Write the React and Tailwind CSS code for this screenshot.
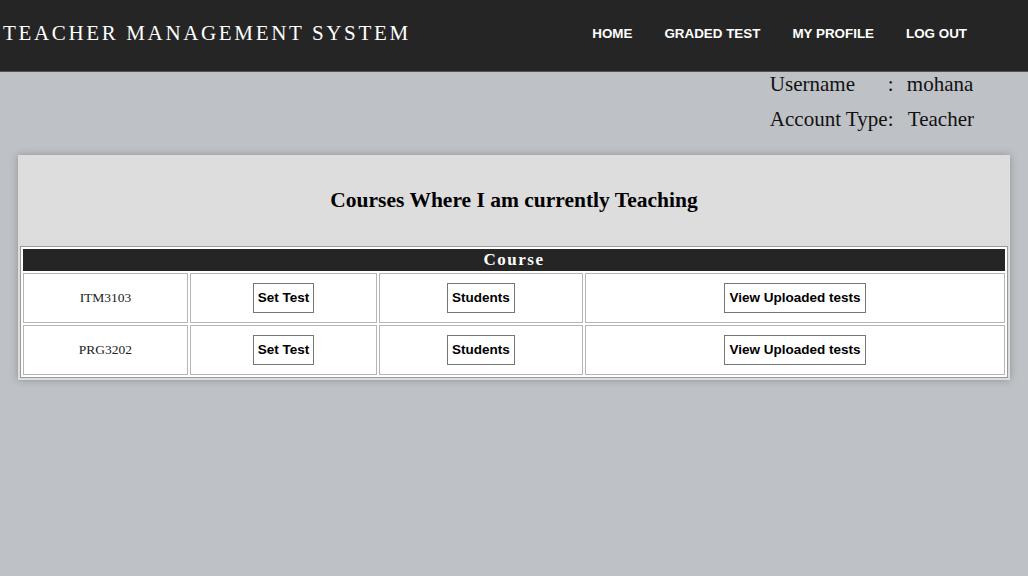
import React from "react";

const courses = ["ITM3103", "PRG3202"];

const Btn = ({ children }) => (
  <button className="border border-[#767676] bg-white px-[4px] h-[30px] text-[13.5px] font-bold text-black font-['Liberation_Sans',Arial,sans-serif]">
    {children}
  </button>
);

export default function App() {
  return (
    <div className="min-h-[576px] bg-[#bec2c6] font-['Liberation_Serif','Times_New_Roman',serif]">
      <header className="h-[72px] bg-[#252525] border-b border-[#555] flex items-center">
        <div className="pl-[3px] text-white text-[21px] tracking-[2.65px] leading-none pb-[4px]">
          TEACHER MANAGEMENT SYSTEM
        </div>
        <nav className="ml-auto mr-[61px] flex gap-[32px] text-white font-bold text-[13.4px] font-['Liberation_Sans',Arial,sans-serif] pb-[2px]">
          <a>HOME</a>
          <a>GRADED TEST</a>
          <a>MY PROFILE</a>
          <a>LOG OUT</a>
        </nav>
      </header>

      <div className="flex justify-end pr-[54px] -mt-[5px]">
        <div className="grid grid-cols-[118px_19px_auto] text-[21px] leading-[35px] text-[#111]">
          <span>Username</span>
          <span>:</span>
          <span>mohana</span>
          <span>Account Type</span>
          <span>:</span>
          <span className="pl-[1px]">Teacher</span>
        </div>
      </div>

      <div className="mx-[18px] mt-[18px] bg-[#dddddd] shadow-[0_0_8px_rgba(0,0,0,0.25)] px-[2px] pb-[2px]">
        <h2 className="h-[91px] flex items-center justify-center text-[21.5px] font-bold text-black">
          Courses Where I am currently Teaching
        </h2>
        <table className="w-full border border-[#999] border-separate border-spacing-[2px] bg-white">
          <thead>
            <tr>
              <th colSpan={4} className="bg-[#252525] text-white text-[17px] font-bold tracking-[1.5px] h-[22px] leading-[22px] p-0">
                Course
              </th>
            </tr>
          </thead>
          <tbody>
            {courses.map((c) => (
              <tr key={c}>
                <td className="w-[165px] h-[50px] border border-[#b5b5b5] text-center text-[13.5px] text-[#222]">{c}</td>
                <td className="w-[187px] border border-[#b5b5b5] text-center">
                  <Btn>Set Test</Btn>
                </td>
                <td className="w-[204px] border border-[#b5b5b5] text-center">
                  <Btn>Students</Btn>
                </td>
                <td className="border border-[#b5b5b5] text-center">
                  <Btn>View Uploaded tests</Btn>
                </td>
              </tr>
            ))}
          </tbody>
        </table>
      </div>
    </div>
  );
}
